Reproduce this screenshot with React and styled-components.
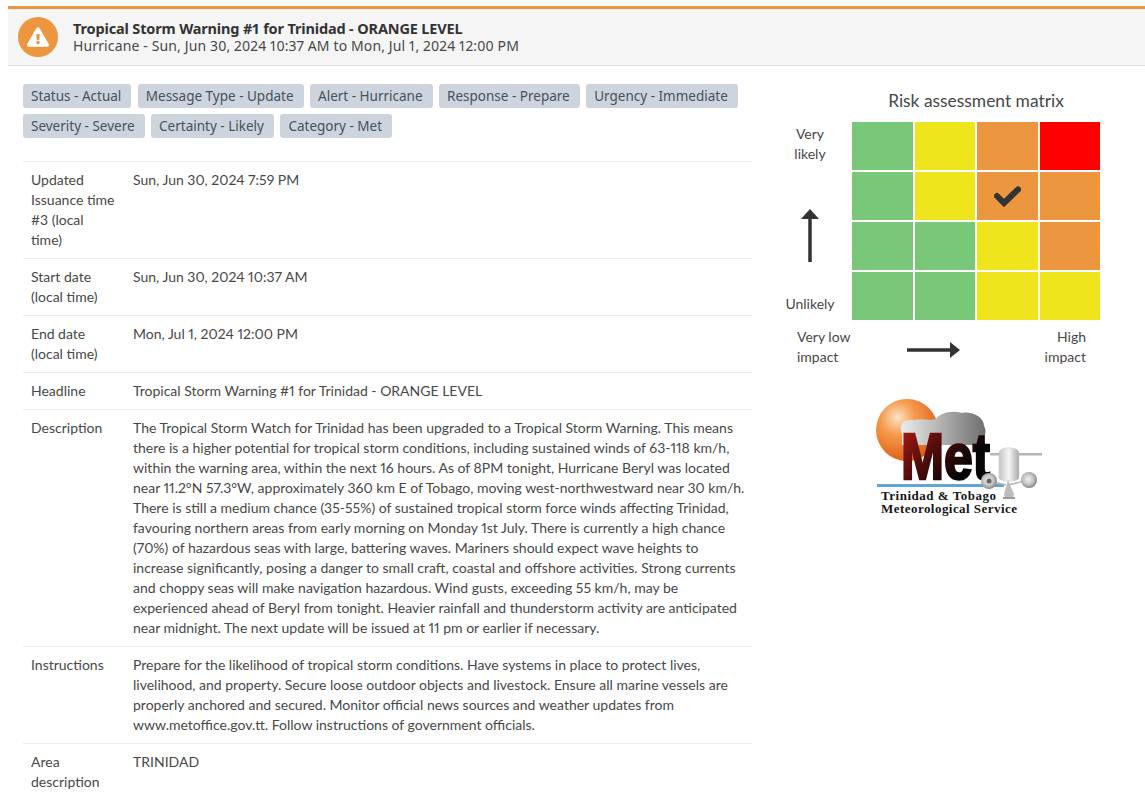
import React from 'react';
import styled, { createGlobalStyle } from 'styled-components';
import { FaExclamationTriangle } from 'react-icons/fa';

const colors = {
  orange: '#ec963f',
  green: '#79c779',
  yellow: '#efe51c',
  red: '#fe0000',
  text: '#484848',
  dark: '#333333',
  line: '#ececec',
  tag: '#ced4dd',
  tagText: '#47505c',
};

const GlobalStyle = createGlobalStyle`
  html, body {
    margin: 0;
    background: #fff;
  }
  body {
    font-family: Lato, "Open Sans", sans-serif;
    font-size: 14px;
    line-height: 20px;
    font-variant-numeric: proportional-nums;
    color: ${colors.text};
    overflow: hidden;
  }
`;

const Page = styled.div`
  padding: 6px 0 0 8px;
`;

const Banner = styled.header`
  display: flex;
  align-items: center;
  gap: 15px;
  height: 56px;
  padding-left: 10px;
  background: #f5f5f5;
  border-top: 3px solid ${colors.orange};
  border-bottom: 1px solid #dcdfe3;
`;

const Badge = styled.div`
  flex: none;
  display: flex;
  align-items: center;
  justify-content: center;
  width: 40px;
  height: 40px;
  border-radius: 50%;
  background: ${colors.orange};
  color: #fff;
  font-size: 22px;
`;

const BannerTitle = styled.div`
  font-family: "Noto Sans", sans-serif;
  font-weight: 700;
  font-size: 14.5px;
  line-height: 17px;
  letter-spacing: -0.15px;
  color: ${colors.dark};
`;

const BannerSub = styled.div`
  font-family: "Noto Sans", sans-serif;
  font-size: 14px;
  line-height: 18px;
  letter-spacing: 0.13px;
  color: ${colors.text};
`;

const Body = styled.div`
  display: flex;
  padding: 18px 0 0 15px;
`;

const Details = styled.main`
  flex: none;
  width: 729px;
`;

const Tags = styled.div`
  display: flex;
  flex-wrap: wrap;
  gap: 6px 6.5px;
  margin-bottom: 23px;
`;

const Tag = styled.span`
  height: 24px;
  padding: 0 10px 0 8px;
  border-radius: 3px;
  background: ${colors.tag};
  color: ${colors.tagText};
  font-family: "Noto Sans", sans-serif;
  font-size: 13.5px;
  line-height: 24px;
`;

const Table = styled.table`
  width: 100%;
  border-collapse: collapse;
  table-layout: fixed;
`;

const Row = styled.tr`
  border-top: 1px solid ${colors.line};
`;

const Label = styled.td`
  width: 102px;
  padding: 8px;
  box-sizing: border-box;
  vertical-align: top;
`;

const Value = styled.td`
  padding: 8px 4px 8px 8px;
  vertical-align: top;
`;

const Side = styled.aside`
  flex: none;
  width: 336px;
  margin: 7px 0 0 20px;
`;

const MatrixTitle = styled.h2`
  margin: 0 0 11px;
  padding-left: 72px;
  text-align: center;
  font-size: 17.4px;
  font-weight: 400;
  line-height: 20px;
  color: ${colors.text};
`;

const MatrixWrap = styled.div`
  display: grid;
  grid-template-columns: 80px 248px;
`;

const YAxis = styled.div`
  display: flex;
  flex-direction: column;
  align-items: center;
  justify-content: space-between;
  text-align: center;
  padding: 2px 4px 6px 0;
`;

const Grid = styled.div`
  display: grid;
  grid-template-columns: repeat(4, 1fr);
  grid-template-rows: repeat(4, 48px);
  gap: 2px;
`;

const Cell = styled.div`
  display: flex;
  align-items: center;
  justify-content: center;
  background: ${p => colors[p.$tone]};
`;

const XAxis = styled.div`
  grid-column: 1 / 3;
  display: grid;
  grid-template-columns: 110px 53px 1fr;
  align-items: center;
  margin-top: 7px;
  padding: 0 14px 0 25px;
`;

const HighLabel = styled.div`
  text-align: right;
`;

const ArrowUpIcon = styled.svg`
  margin-top: 14px;
`;

const ArrowRightIcon = styled.svg`
  margin-top: 6px;
`;

const LogoWrap = styled.div`
  margin: 23px 0 0 88px;
  height: 135px;
`;

const details = [
  ['Updated Issuance time #3 (local time)', 'Sun, Jun 30, 2024 7:59 PM'],
  ['Start date (local time)', 'Sun, Jun 30, 2024 10:37 AM'],
  ['End date (local time)', 'Mon, Jul 1, 2024 12:00 PM'],
  ['Headline', 'Tropical Storm Warning #1 for Trinidad - ORANGE LEVEL'],
  [
    'Description',
    'The Tropical Storm Watch for Trinidad has been upgraded to a Tropical Storm Warning. This means there is a higher potential for tropical storm conditions, including sustained winds of 63-118 km/h, within the warning area, within the next 16 hours. As of 8PM tonight, Hurricane Beryl was located near 11.2°N 57.3°W, approximately 360 km E of Tobago, moving west-northwestward near 30 km/h. There is still a medium chance (35-55%) of sustained tropical storm force winds affecting Trinidad, favouring northern areas from early morning on Monday 1st July. There is currently a high chance (70%) of hazardous seas with large, battering waves. Mariners should expect wave heights to increase significantly, posing a danger to small craft, coastal and offshore activities. Strong currents and choppy seas will make navigation hazardous. Wind gusts, exceeding 55 km/h, may be experienced ahead of Beryl from tonight. Heavier rainfall and thunderstorm activity are anticipated near midnight. The next update will be issued at 11 pm or earlier if necessary.',
  ],
  [
    'Instructions',
    'Prepare for the likelihood of tropical storm conditions. Have systems in place to protect lives, livelihood, and property. Secure loose outdoor objects and livestock. Ensure all marine vessels are properly anchored and secured. Monitor official news sources and weather updates from www.metoffice.gov.tt. Follow instructions of government officials.',
  ],
  ['Area description', 'TRINIDAD'],
];

const tags = [
  'Status - Actual',
  'Message Type - Update',
  'Alert - Hurricane',
  'Response - Prepare',
  'Urgency - Immediate',
  'Severity - Severe',
  'Certainty - Likely',
  'Category - Met',
];

const matrix = [
  ['green', 'yellow', 'orange', 'red'],
  ['green', 'yellow', 'orange', 'orange'],
  ['green', 'green', 'yellow', 'orange'],
  ['green', 'green', 'yellow', 'yellow'],
];

const ArrowUp = () => (
  <ArrowUpIcon width="18" height="54" viewBox="0 0 18 54">
    <path d="M9 8V53" stroke="#333" strokeWidth="3.5" />
    <path d="M9 0L18 10H0Z" fill="#333" />
  </ArrowUpIcon>
);

const ArrowRight = () => (
  <ArrowRightIcon width="54" height="16" viewBox="0 0 54 16">
    <path d="M0 8H44" stroke="#333" strokeWidth="3.5" />
    <path d="M43 0L53 8L43 16Z" fill="#333" />
  </ArrowRightIcon>
);

const CheckMark = () => (
  <svg width="27" height="21" viewBox="0 0 27 21">
    <path d="M3 10L10 17L24 3.5" fill="none" stroke="#333" strokeWidth="6" strokeLinecap="round" />
  </svg>
);

const MetLogo = () => (
  <svg width="200" height="135" viewBox="0 0 200 135">
    <defs>
      <radialGradient id="sun" cx="0.35" cy="0.3" r="0.8">
        <stop offset="0" stopColor="#fde3c8" />
        <stop offset="0.35" stopColor="#f59a4c" />
        <stop offset="1" stopColor="#d9540e" />
      </radialGradient>
      <linearGradient id="cloud" x1="0" x2="1" y1="0" y2="0">
        <stop offset="0" stopColor="#ececec" />
        <stop offset="0.45" stopColor="#b4b4b4" />
        <stop offset="1" stopColor="#6e6e6e" />
      </linearGradient>
      <linearGradient id="met" gradientUnits="userSpaceOnUse" x1="40" y1="45" x2="95" y2="92">
        <stop offset="0" stopColor="#a01a14" />
        <stop offset="0.5" stopColor="#4d0c0a" />
        <stop offset="1" stopColor="#050505" />
      </linearGradient>
      <linearGradient id="tank" x1="0" x2="1" y1="0" y2="0">
        <stop offset="0" stopColor="#c4c4c4" />
        <stop offset="0.5" stopColor="#f5f5f5" />
        <stop offset="1" stopColor="#a9a9a9" />
      </linearGradient>
      <radialGradient id="ball" cx="0.45" cy="0.45" r="0.6">
        <stop offset="0" stopColor="#f4f4f4" />
        <stop offset="0.6" stopColor="#bdbdbd" />
        <stop offset="1" stopColor="#777" />
      </radialGradient>
    </defs>
    <circle cx="47" cy="40" r="31" fill="url(#sun)" />
    <path
      d="M42 44C38 34 44 29 54 30C62 28 68 31 76 29C80 23 92 20 102 23C112 21 124 27 124 36C128 42 124 52 115 55L42 55Z"
      fill="url(#cloud)"
    />
    <text x="41" y="89" fontFamily="Liberation Sans, sans-serif" fontWeight="700" fontSize="64" textLength="89" lengthAdjust="spacingAndGlyphs" fill="url(#met)" stroke="url(#met)" strokeWidth="2.5">Met</text>
    <rect x="130" y="63" width="52" height="2.5" fill="#b5b5b5" />
    <rect x="17" y="94" width="127" height="3" fill="#5fa6d6" />
    <path d="M139 63C139 56 159 56 159 63V88C159 92 139 92 139 88Z" fill="url(#tank)" stroke="#c8c8c8" strokeWidth="0.5" />
    <path d="M148 90L144 104C144 110 154 110 154 104Z" fill="#bdbdbd" />
    <path d="M143 108H155" stroke="#999" strokeWidth="2" />
    <path d="M148 95L169 90" stroke="#b5b5b5" strokeWidth="1.5" />
    <path d="M134 92L146 95" stroke="#b5b5b5" strokeWidth="1.5" />
    <circle cx="129" cy="91" r="8" fill="url(#ball)" />
    <circle cx="129" cy="91" r="2.5" fill="#666" />
    <circle cx="169" cy="90" r="8" fill="url(#ball)" />
    <text x="21" y="110" fontFamily="Liberation Serif, serif" fontWeight="700" fontSize="13" textLength="115" fill="#161616">Trinidad &amp; Tobago</text>
    <text x="21" y="123" fontFamily="Liberation Serif, serif" fontWeight="700" fontSize="13" textLength="136" fill="#161616">Meteorological Service</text>
  </svg>
);

const App = () => (
  <Page>
    <GlobalStyle />
    <Banner>
      <Badge>
        <FaExclamationTriangle />
      </Badge>
      <div>
        <BannerTitle>Tropical Storm Warning #1 for Trinidad - ORANGE LEVEL</BannerTitle>
        <BannerSub>Hurricane - Sun, Jun 30, 2024 10:37 AM to Mon, Jul 1, 2024 12:00 PM</BannerSub>
      </div>
    </Banner>
    <Body>
      <Details>
        <Tags>
          {tags.map(tag => (
            <Tag key={tag}>{tag}</Tag>
          ))}
        </Tags>
        <Table>
          <tbody>
            {details.map(([label, value]) => (
              <Row key={label}>
                <Label>{label}</Label>
                <Value>{value}</Value>
              </Row>
            ))}
          </tbody>
        </Table>
      </Details>
      <Side>
        <MatrixTitle>Risk assessment matrix</MatrixTitle>
        <MatrixWrap>
          <YAxis>
            <div>
              Very
              <br />
              likely
            </div>
            <ArrowUp />
            <div>Unlikely</div>
          </YAxis>
          <Grid>
            {matrix.flatMap((row, r) =>
              row.map((tone, c) => (
                <Cell key={`${r}-${c}`} $tone={tone}>
                  {r === 1 && c === 2 && <CheckMark />}
                </Cell>
              )),
            )}
          </Grid>
          <XAxis>
            <div>
              Very low
              <br />
              impact
            </div>
            <ArrowRight />
            <HighLabel>
              High
              <br />
              impact
            </HighLabel>
          </XAxis>
        </MatrixWrap>
        <LogoWrap>
          <MetLogo />
        </LogoWrap>
      </Side>
    </Body>
  </Page>
);

export default App;
